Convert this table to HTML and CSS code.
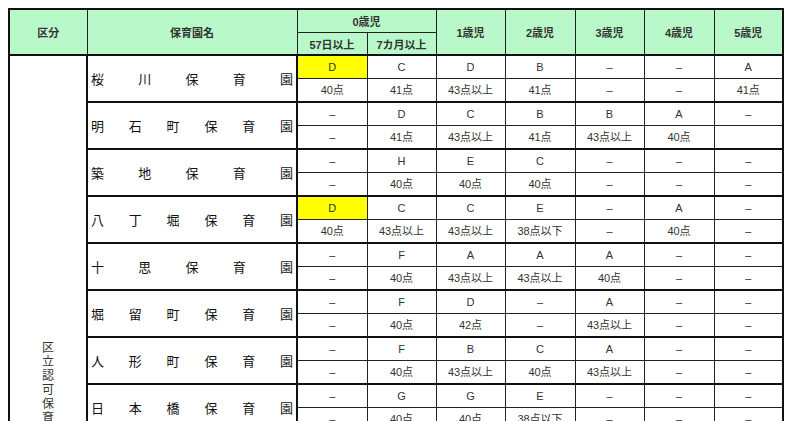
FILE: index.html
```html
<!DOCTYPE html>
<html lang="ja">
<head>
<meta charset="utf-8">
<title>保育園 指数表</title>
<link rel="stylesheet" href="styles.css">
</head>
<body>
<table class="grid">
  <colgroup>
    <col class="c-kubun"><col class="c-name">
    <col class="c-a"><col class="c-b"><col class="c-b"><col class="c-a"><col class="c-b"><col class="c-a"><col class="c-b">
  </colgroup>
  <thead>
    <tr class="h1">
      <th rowspan="2">区分</th>
      <th rowspan="2">保育園名</th>
      <th colspan="2" class="sub">0歳児</th>
      <th rowspan="2">1歳児</th>
      <th rowspan="2">2歳児</th>
      <th rowspan="2">3歳児</th>
      <th rowspan="2">4歳児</th>
      <th rowspan="2">5歳児</th>
    </tr>
    <tr class="h2">
      <th>57日以上</th>
      <th>7カ月以上</th>
    </tr>
  </thead>
  <tbody>
    <tr class="top">
      <td rowspan="16" class="kubun"><span class="vt">区立認可保育園</span></td>
      <td rowspan="2" class="name"><div class="nm"><span>桜</span><span>川</span><span>保</span><span>育</span><span>園</span></div></td>
      <td class="hl">D</td><td>C</td><td>D</td><td>B</td><td>–</td><td>–</td><td>A</td>
    </tr>
    <tr class="bot"><td>40点</td><td>41点</td><td>43点以上</td><td>41点</td><td>–</td><td>–</td><td>41点</td></tr>

    <tr class="top">
      <td rowspan="2" class="name"><div class="nm"><span>明</span><span>石</span><span>町</span><span>保</span><span>育</span><span>園</span></div></td>
      <td>–</td><td>D</td><td>C</td><td>B</td><td>B</td><td>A</td><td>–</td>
    </tr>
    <tr class="bot"><td>–</td><td>41点</td><td>43点以上</td><td>41点</td><td>43点以上</td><td>40点</td><td></td></tr>

    <tr class="top">
      <td rowspan="2" class="name"><div class="nm"><span>築</span><span>地</span><span>保</span><span>育</span><span>園</span></div></td>
      <td>–</td><td>H</td><td>E</td><td>C</td><td>–</td><td>–</td><td>–</td>
    </tr>
    <tr class="bot"><td>–</td><td>40点</td><td>40点</td><td>40点</td><td>–</td><td>–</td><td>–</td></tr>

    <tr class="top">
      <td rowspan="2" class="name"><div class="nm"><span>八</span><span>丁</span><span>堀</span><span>保</span><span>育</span><span>園</span></div></td>
      <td class="hl">D</td><td>C</td><td>C</td><td>E</td><td>–</td><td>A</td><td>–</td>
    </tr>
    <tr class="bot"><td>40点</td><td>43点以上</td><td>43点以上</td><td>38点以下</td><td>–</td><td>40点</td><td>–</td></tr>

    <tr class="top">
      <td rowspan="2" class="name"><div class="nm"><span>十</span><span>思</span><span>保</span><span>育</span><span>園</span></div></td>
      <td>–</td><td>F</td><td>A</td><td>A</td><td>A</td><td>–</td><td>–</td>
    </tr>
    <tr class="bot"><td>–</td><td>40点</td><td>43点以上</td><td>43点以上</td><td>40点</td><td>–</td><td>–</td></tr>

    <tr class="top">
      <td rowspan="2" class="name"><div class="nm"><span>堀</span><span>留</span><span>町</span><span>保</span><span>育</span><span>園</span></div></td>
      <td>–</td><td>F</td><td>D</td><td>–</td><td>A</td><td>–</td><td>–</td>
    </tr>
    <tr class="bot"><td>–</td><td>40点</td><td>42点</td><td>–</td><td>43点以上</td><td>–</td><td>–</td></tr>

    <tr class="top">
      <td rowspan="2" class="name"><div class="nm"><span>人</span><span>形</span><span>町</span><span>保</span><span>育</span><span>園</span></div></td>
      <td>–</td><td>F</td><td>B</td><td>C</td><td>A</td><td>–</td><td>–</td>
    </tr>
    <tr class="bot"><td>–</td><td>40点</td><td>43点以上</td><td>40点</td><td>43点以上</td><td>–</td><td>–</td></tr>

    <tr class="top">
      <td rowspan="2" class="name"><div class="nm"><span>日</span><span>本</span><span>橋</span><span>保</span><span>育</span><span>園</span></div></td>
      <td>–</td><td>G</td><td>G</td><td>E</td><td>–</td><td>–</td><td>–</td>
    </tr>
    <tr class="bot"><td>–</td><td>40点</td><td>40点</td><td>38点以下</td><td>–</td><td>–</td><td>–</td></tr>
  </tbody>
</table>
</body>
</html>
```
FILE: styles.css
```css
html, body {
  margin: 0;
  padding: 0;
  background: #ffffff;
}
body {
  padding: 8px;
  font-family: "Liberation Sans", "Noto Sans CJK JP", sans-serif;
  color: #222;
}
.grid {
  border-collapse: collapse;
  table-layout: fixed;
  width: 774px;
  border: 2px solid #111;
}
.c-kubun { width: 78px; }
.c-name { width: 210px; }
.c-a { width: 70px; }
.c-b { width: 69px; }

.grid th {
  background: #b9f9c9;
  font-size: 11px;
  font-weight: bold;
  color: #333;
  border: 1px solid #222;
  padding: 0;
  text-align: center;
  vertical-align: middle;
}
.h1 th { height: 22px; }
.h2 th { height: 21px; }
.grid thead tr.h1 th { border-top: 2px solid #111; border-bottom: 2px solid #111; }
.grid thead tr.h1 th.sub { border-bottom: 1px solid #222; }
.grid thead tr.h2 th { border-bottom: 2px solid #111; }

.grid td {
  font-size: 11px;
  line-height: 14px;
  text-align: center;
  vertical-align: middle;
  border: 1px solid #222;
  padding: 0;
  color: #333;
}
.grid tr.top, .grid tr.bot { height: 23.5px; }
.grid tr.top td { border-top: 2px solid #111; }
.grid td.hl { background: #ffff00; }

.grid td.kubun {
  vertical-align: top;
  padding-top: 284px;
  border-top: 2px solid #111;
  border-right: 2px solid #111;
}
.vt {
  display: block;
  width: 12px;
  height: 40px;
  margin: 0 auto;
  word-break: break-all;
  font-family: "Noto Sans CJK JP", sans-serif;
  font-size: 12px;
  line-height: 14px;
  color: #333;
}
.grid td.name {
  padding: 0 3px 0 3px;
  border-right: 2px solid #111;
}
.nm {
  display: flex;
  justify-content: space-between;
  font-family: "Noto Sans CJK JP", sans-serif;
  font-size: 13px;
  line-height: 16px;
  color: #111;
}
```
